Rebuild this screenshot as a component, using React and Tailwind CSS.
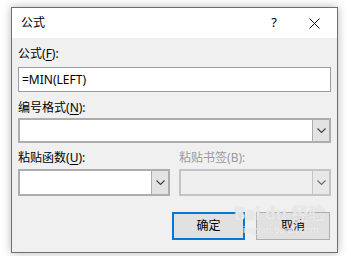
import React from 'react';

const font = { fontFamily: '"Noto Sans", "Noto Sans CJK SC", sans-serif' };

const Chevron = ({ color = '#404040' }) => (
  <svg width="9" height="5" viewBox="0 0 9 5" fill="none">
    <path d="M0.5 0.5 L4.5 4.5 L8.5 0.5" stroke={color} strokeWidth="1.1" />
  </svg>
);

const Label = ({ text, accel, rest, disabled, className = '' }) => (
  <div className={`text-[12px] leading-[14px] ${disabled ? 'text-[#9a9a9a]' : 'text-black'} ${className}`}>
    {text}(<span className={disabled ? '' : 'underline underline-offset-2'}>{accel}</span>){rest}
  </div>
);

const Combo = ({ disabled, className = '' }) => (
  <div
    className={`flex border-2 ${disabled ? 'border-[#c4c4c4] bg-[#efefef]' : 'border-[#adadad] bg-white'} ${className}`}
  >
    <div className="flex-1" />
    <div
      className={`w-[17px] flex items-center justify-center border-l ${disabled ? 'border-[#c4c4c4] bg-[#e8e8e8]' : 'border-[#adadad] bg-[#e3e3e3]'}`}
    >
      <Chevron color={disabled ? '#6a6a6a' : '#404040'} />
    </div>
  </div>
);

export default function App() {
  return (
    <div className="w-[351px] h-[256px] bg-white pt-[7px] pl-[11px] overflow-hidden" style={font}>
      <div className="w-[327px] h-[246px] border border-[#6e6e6e] bg-[#f0f0f0] flex flex-col shadow-[0_0_9px_rgba(0,0,0,0.28)]">
        {/* title bar */}
        <div className="h-[30px] bg-white flex items-center pl-[9px]">
          <span className="text-[12px] text-black flex-1">公式</span>
          <span className="text-[13px] text-black w-[20px] mr-[25px] text-center">?</span>
          <div className="w-[12px] mr-[16px] flex items-center">
            <svg width="11" height="11" viewBox="0 0 11 11">
              <path d="M0.5 0.5 L10.5 10.5 M10.5 0.5 L0.5 10.5" stroke="#111" strokeWidth="1" />
            </svg>
          </div>
        </div>

        {/* body */}
        <div className="relative flex-1 px-[6px] pt-[9px]">
          <Label text="公式" accel="F" rest=":" />
          <div className="mt-[6px] h-[25px] border border-[#9c9c9c] bg-white flex items-center pl-[3px] text-[12px] text-black">
            =MIN(LEFT)
          </div>

          <Label text="编号格式" accel="N" rest=":" className="mt-[9px]" />
          <Combo className="mt-[3px] h-[25px]" />

          <div className="mt-[8px] grid grid-cols-2 gap-[9px]">
            <div>
              <Label text="粘贴函数" accel="U" rest=":" />
              <Combo className="mt-[4px] h-[27px]" />
            </div>
            <div>
              <Label text="粘贴书签" accel="B" rest=":" disabled />
              <Combo className="mt-[4px] h-[27px]" disabled />
            </div>
          </div>

          <div className="mt-[16px] flex justify-end gap-[11px] pr-[1px]">
            <button className="w-[73px] h-[28px] border-2 border-[#0078d7] bg-[#e1e1e1] text-[12px] text-black">
              确定
            </button>
            <button className="w-[74px] h-[28px] border border-[#adadad] bg-[#e1e1e1] text-[12px] text-black">
              取消
            </button>
          </div>

          {/* watermark */}
          <div className="absolute left-[222px] top-[166px] flex flex-col items-center pointer-events-none select-none whitespace-nowrap">
            <div
              className="text-[17px] leading-[20px] font-bold text-white/60 whitespace-nowrap"
              style={{ textShadow: '0 0 1px #c4c4c4' }}
            >
              Bai du 经验
            </div>
            <div
              className="text-[9px] leading-[11px] text-white/70 whitespace-nowrap"
              style={{ textShadow: '0 0 1px #c8c8c8' }}
            >
              jingyan.baidu.com
            </div>
          </div>
        </div>
      </div>
    </div>
  );
}
